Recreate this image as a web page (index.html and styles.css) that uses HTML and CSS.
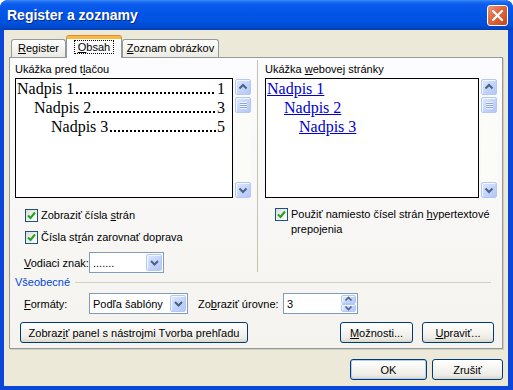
FILE: index.html
```html
<!DOCTYPE html>
<html lang="sk">
<head>
  <meta charset="UTF-8">
  <title>Register a zoznamy</title>
  <link rel="stylesheet" href="styles.css">
</head>
<body>

<div class="window">

  <!-- Title bar -->
  <div class="titlebar">
    <span class="title">Register a zoznamy</span>
    <div class="close">
      <svg width="13" height="13" viewBox="0 0 13 13">
        <path d="M2 2 L11 11 M11 2 L2 11" stroke="#fff" stroke-width="2.2" stroke-linecap="round"/>
      </svg>
    </div>
  </div>

  <div class="client">

    <!-- Tabs -->
    <div class="tabs">
      <div class="tab tab-register"><u>R</u>egister</div>
      <div class="tab tab-obsah active"><span class="focus"><u>O</u>bsah</span></div>
      <div class="tab tab-zoznam"><u>Z</u>oznam obrázkov</div>
    </div>

    <div class="panel">

      <div class="previews">
        <!-- Print preview -->
        <div class="col col-left">
          <div class="label">Ukážka pred t<u>l</u>ačou</div>
          <div class="preview-row">
            <div class="box print">
              <div class="toc-row"><span>Nadpis 1</span><span class="dots"></span><span>1</span></div>
              <div class="toc-row lvl2"><span>Nadpis 2</span><span class="dots"></span><span>3</span></div>
              <div class="toc-row lvl3"><span>Nadpis 3</span><span class="dots"></span><span>5</span></div>
            </div>
            <div class="scrollbar">
              <div class="sb-btn">
                <svg width="14" height="14" viewBox="0 0 14 14"><polyline points="3.5,8.5 7,5 10.5,8.5" fill="none" stroke="#4d6185" stroke-width="2"/></svg>
              </div>
              <div class="sb-thumb"><span class="grip"></span></div>
              <div class="sb-track"></div>
              <div class="sb-btn">
                <svg width="14" height="14" viewBox="0 0 14 14"><polyline points="3.5,5.5 7,9 10.5,5.5" fill="none" stroke="#4d6185" stroke-width="2"/></svg>
              </div>
            </div>
          </div>

          <div class="checks">
            <div class="check-row">
              <span class="cb"><svg width="11" height="11" viewBox="0 0 11 11"><polyline points="2,5.5 4.5,8 9,2.5" fill="none" stroke="#21a121" stroke-width="2"/></svg></span>
              <span>Zobraziť čísla <u>s</u>trán</span>
            </div>
            <div class="check-row">
              <span class="cb"><svg width="11" height="11" viewBox="0 0 11 11"><polyline points="2,5.5 4.5,8 9,2.5" fill="none" stroke="#21a121" stroke-width="2"/></svg></span>
              <span>Čísla st<u>r</u>án zarovnať doprava</span>
            </div>
          </div>

          <div class="field-row leader-row">
            <span class="field-label"><u>V</u>odiaci znak:</span>
            <div class="combo combo-leader">
              <span class="combo-val">.......</span>
              <span class="drop">
                <svg width="13" height="13" viewBox="0 0 13 13"><polyline points="3,5 6.5,8.5 10,5" fill="none" stroke="#4d6185" stroke-width="2"/></svg>
              </span>
            </div>
          </div>
        </div>

        <div class="sep"></div>

        <!-- Web preview -->
        <div class="col col-right">
          <div class="label">Ukážka <u>w</u>ebovej stránky</div>
          <div class="preview-row">
            <div class="box web">
              <div class="web-row"><a>Nadpis 1</a></div>
              <div class="web-row lvl2"><a>Nadpis 2</a></div>
              <div class="web-row lvl3w"><a>Nadpis 3</a></div>
            </div>
            <div class="scrollbar">
              <div class="sb-btn">
                <svg width="14" height="14" viewBox="0 0 14 14"><polyline points="3.5,8.5 7,5 10.5,8.5" fill="none" stroke="#4d6185" stroke-width="2"/></svg>
              </div>
              <div class="sb-thumb"><span class="grip"></span></div>
              <div class="sb-track"></div>
              <div class="sb-btn">
                <svg width="14" height="14" viewBox="0 0 14 14"><polyline points="3.5,5.5 7,9 10.5,5.5" fill="none" stroke="#4d6185" stroke-width="2"/></svg>
              </div>
            </div>
          </div>

          <div class="checks">
            <div class="check-row multi">
              <span class="cb"><svg width="11" height="11" viewBox="0 0 11 11"><polyline points="2,5.5 4.5,8 9,2.5" fill="none" stroke="#21a121" stroke-width="2"/></svg></span>
              <span class="multi-text">Použiť namiesto čísel strán <u>h</u>ypertextové<br>prepojenia</span>
            </div>
          </div>
        </div>
      </div>

      <!-- General group -->
      <div class="group-head">
        <span>Všeobecné</span>
        <span class="group-line"></span>
      </div>

      <div class="field-row formats-row">
        <span class="field-label"><u>F</u>ormáty:</span>
        <div class="combo combo-format">
          <span class="combo-val">Podľa šablóny</span>
          <span class="drop">
            <svg width="13" height="13" viewBox="0 0 13 13"><polyline points="3,5 6.5,8.5 10,5" fill="none" stroke="#4d6185" stroke-width="2"/></svg>
          </span>
        </div>
        <span class="levels-label">Zo<u>b</u>raziť úrovne:</span>
        <div class="spin">
          <span class="combo-val">3</span>
          <span class="spin-btns">
            <span class="spin-half">
              <svg width="9" height="6" viewBox="0 0 9 6"><polyline points="1.5,4.5 4.5,1.5 7.5,4.5" fill="none" stroke="#4d6185" stroke-width="1.6"/></svg>
            </span>
            <span class="spin-half">
              <svg width="9" height="6" viewBox="0 0 9 6"><polyline points="1.5,1.5 4.5,4.5 7.5,1.5" fill="none" stroke="#4d6185" stroke-width="1.6"/></svg>
            </span>
          </span>
        </div>
      </div>

      <div class="button-row">
        <button class="btn btn-wide">Zobraz<u>i</u>ť panel s nástrojmi Tvorba prehľadu</button>
        <button class="btn btn-options"><u>M</u>ožnosti...</button>
        <button class="btn btn-edit"><u>U</u>praviť...</button>
      </div>

    </div>

    <div class="footer">
      <button class="btn btn-ok">OK</button>
      <button class="btn btn-cancel">Zrušiť</button>
    </div>

  </div>
</div>

</body>
</html>
```

FILE: styles.css
```css
body {
  margin: 0;
  background: #fff;
  font-family: "Liberation Sans", Arial, sans-serif;
  font-size: 11px;
  color: #000;
}

u {
  text-decoration: underline;
  text-underline-offset: 1px;
}

.window {
  width: 513px;
  height: 390px;
  box-sizing: border-box;
  display: flex;
  flex-direction: column;
  background: #0a46d7;
  border-radius: 8px 8px 0 0;
  overflow: hidden;
}

/* Title bar */
.titlebar {
  height: 30px;
  flex-shrink: 0;
  display: flex;
  align-items: flex-start;
  justify-content: space-between;
  padding: 0 5px 0 7px;
  background: linear-gradient(to bottom, #3d8ff6 0px, #1a6af0 2px, #0a5aee 5px, #0055e6 14px, #0052df 22px, #0049cc 27px, #003fb8 30px);
}

.title {
  color: #fff;
  font-weight: bold;
  font-size: 14px;
  line-height: 31px;
  text-shadow: 1px 1px 0 #0b2a8a;
}

.close {
  margin-top: 5px;
  width: 21px;
  height: 21px;
  box-sizing: border-box;
  border: 1px solid #fff;
  border-radius: 3px;
  background: linear-gradient(135deg, #ec9a7a 0%, #e16a40 40%, #c8461e 100%);
  display: flex;
  align-items: center;
  justify-content: center;
}

/* Client area */
.client {
  flex: 1;
  margin: 0 5px 4px 4px;
  background: #ece9d8;
  padding: 6px 5px 0 5px;
  display: flex;
  flex-direction: column;
}

.tabs {
  display: flex;
  height: 22px;
  padding-left: 2px;
  margin-bottom: -1px;
  position: relative;
  z-index: 1;
}

.tab {
  box-sizing: border-box;
  margin-top: 3px;
  height: 18px;
  border: 1px solid #919b9c;
  border-bottom: none;
  border-radius: 3px 3px 0 0;
  background: linear-gradient(to bottom, #fff, #f3f2ed 60%, #ebeae4);
  text-align: center;
  line-height: 16px;
}

.tab-register {
  width: 55px;
}

.tab-obsah {
  width: 56px;
}

.tab-zoznam {
  width: 97px;
}

.tab.active {
  margin-top: 0;
  height: 22px;
  border-top: 3px solid #f9b840;
  background: #fcfcfe;
  line-height: 17px;
  box-shadow: 0 -1px 0 #e68b2c;
}

.focus {
  border: 1px dotted #000;
  padding: 0 3px;
}

.panel {
  height: 292px;
  box-sizing: border-box;
  border: 1px solid #919b9c;
  background: linear-gradient(to bottom, #fcfcfe, #f4f3ee);
  box-shadow: 1px 1px 0 #d0cebf;
  padding: 4px 5px 4px 5px;
  display: flex;
  flex-direction: column;
}

.previews {
  display: flex;
  height: 212px;
}

.col-left {
  width: 236px;
}

.col-right {
  width: 232px;
}

.sep {
  width: 1px;
  height: 212px;
  margin: -2px 7px 0 6px;
  background: #c5c2b2;
}

.label {
  line-height: 14px;
  padding-bottom: 2px;
}

.preview-row {
  display: flex;
  height: 120px;
  gap: 2px;
}

.box {
  flex: 1;
  min-width: 0;
  border: 1px solid #000;
  background: #fff;
  font-family: "Liberation Serif", "Times New Roman", serif;
  font-size: 16px;
  line-height: 19px;
}

.print {
  padding: 0 7px 0 1px;
}

.web {
  padding: 0 4px 0 1px;
}

.toc-row {
  display: flex;
  white-space: nowrap;
}

/* leader dots drawn as a background so they sit on the baseline */
.dots {
  flex: 1;
  margin: 0 1px 0 2px;
  background-image: radial-gradient(circle at 1px 1px, #000 0.9px, transparent 1.3px);
  background-size: 4px 2px;
  background-position: 0 13px;
  background-repeat: repeat-x;
}

.lvl2 {
  padding-left: 17px;
}

.lvl3 {
  padding-left: 34px;
}

.lvl3w {
  padding-left: 32px;
}

.web-row a {
  color: #0000d4;
  text-decoration: underline;
}

/* Scrollbar */
.scrollbar {
  width: 16px;
  display: flex;
  flex-direction: column;
  background: #fbfbf8;
}

.sb-btn,
.sb-thumb,
.drop,
.spin-half {
  box-sizing: border-box;
  border: 1px solid #b5c8f4;
  border-radius: 2px;
  background: linear-gradient(135deg, #dde8fe 0%, #c6d6fc 50%, #b3c8f5 100%);
  box-shadow: inset 1px 1px 0 #f2f6ff;
  display: flex;
  align-items: center;
  justify-content: center;
}

.sb-btn {
  height: 16px;
}

.sb-btn:first-child {
  margin-top: 1px;
}

.sb-thumb {
  height: 16px;
  margin-top: 2px;
}

.grip {
  width: 7px;
  height: 7px;
  background: repeating-linear-gradient(to bottom, #eef3ff 0, #eef3ff 1px, #8ea7da 1px, #8ea7da 2px);
}

.sb-track {
  flex: 1;
}

/* Checkboxes */
.checks {
  margin-top: 6px;
}

.check-row {
  display: flex;
  align-items: center;
  gap: 3px;
  height: 22px;
  padding-left: 10px;
  white-space: nowrap;
}

.cb {
  width: 13px;
  height: 13px;
  box-sizing: border-box;
  border: 1px solid #1c5180;
  background: linear-gradient(135deg, #dcdcd7, #fff);
  display: flex;
  align-items: center;
  justify-content: center;
}

.check-row.multi {
  align-items: flex-start;
  height: auto;
  padding-top: 4px;
}

.multi-text {
  line-height: 15px;
  margin-top: -1px;
}

/* Fields */
.field-row {
  display: flex;
  align-items: center;
  height: 21px;
}

.leader-row {
  margin-top: 4px;
  padding-left: 9px;
}

.field-label {
  width: 65px;
}

.combo,
.spin {
  box-sizing: border-box;
  height: 21px;
  border: 1px solid #7f9db9;
  background: #fff;
  display: flex;
  align-items: center;
}

.combo-val {
  flex: 1;
  padding-left: 3px;
}

.drop {
  width: 16px;
  height: 17px;
  margin-right: 1px;
}

.combo-leader {
  width: 75px;
}

.combo-format {
  width: 99px;
}

.group-head {
  display: flex;
  align-items: center;
  height: 16px;
  color: #0046d5;
  padding-right: 6px;
}

.group-line {
  flex: 1;
  height: 1px;
  margin-left: 5px;
  background: #d0d0bf;
}

.formats-row {
  margin-top: 3px;
  padding-left: 9px;
}

.levels-label {
  margin-left: 10px;
  width: 85px;
}

.spin {
  width: 75px;
}

.spin-btns {
  display: flex;
  flex-direction: column;
  width: 15px;
  height: 17px;
  margin-right: 1px;
}

.spin-half {
  flex: 1;
}

/* Buttons */
.btn {
  box-sizing: border-box;
  height: 21px;
  border: 1px solid #003c74;
  border-radius: 3px;
  background: linear-gradient(to bottom, #fff 0%, #f7f6f2 40%, #ecebe4 80%, #d9d5cb 100%);
  font-family: "Liberation Sans", Arial, sans-serif;
  font-size: 11px;
  color: #000;
  padding: 0;
  white-space: nowrap;
}

.button-row {
  display: flex;
  margin-top: 8px;
  padding: 0 3px 0 5px;
  gap: 9px;
}

.btn-wide {
  width: 228px;
}

.btn-options {
  width: 73px;
  margin-left: auto;
}

.btn-edit {
  width: 72px;
}

.footer {
  display: flex;
  justify-content: flex-end;
  gap: 5px;
  margin-top: 10px;
}

.btn-ok {
  width: 77px;
  box-shadow: inset 0 0 0 1px #b6cdf6;
}

.btn-cancel {
  width: 71px;
}
```
